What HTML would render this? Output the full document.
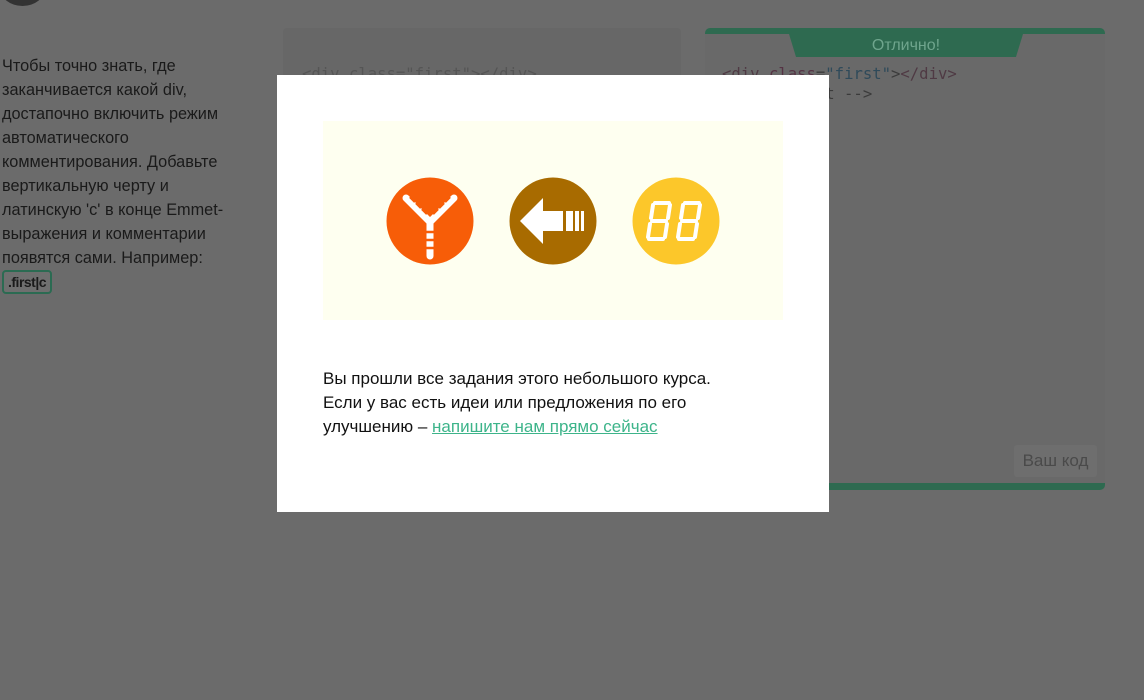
<!DOCTYPE html>
<html><head><meta charset="utf-8"><style>
body{margin:0;width:1144px;height:700px;background:#6b6b6b;position:relative;overflow:hidden;font-family:"Liberation Sans","DejaVu Sans",sans-serif;}
.abs{position:absolute}
.lt{left:2px;top:54px;width:250px;font-size:16.3px;line-height:24px;color:#1a1a1a}
.code{display:inline-block;border:2px solid #2b6b52;border-radius:4px;padding:0 4px;font-weight:bold;font-size:14px;line-height:20px;background:#6f6f6f;letter-spacing:-0.5px}
.mono{font-family:"DejaVu Sans Mono","Liberation Mono",monospace;font-size:15.6px;line-height:20px}
</style></head><body>
<div class="abs" style="left:0;top:-30px;width:45px;height:36px;border-radius:50%;background:#333"></div>
<div class="abs lt">Чтобы точно знать, где заканчивается какой div, достапочно включить режим автоматического комментирования. Добавьте вертикальную черту и латинскую 'c' в конце Emmet-выражения и комментарии появятся сами. Например:<br><span class="code">.first|c</span></div>
<div class="abs" style="left:283px;top:28px;width:398px;height:470px;background:#676767;border-radius:4px"></div>
<div class="abs mono" style="left:302px;top:64px;color:#555">&lt;div class="first"&gt;&lt;/div&gt;</div>
<div class="abs" style="left:705px;top:28px;border-top:6px solid #2e6a50;border-bottom:7px solid #2e6a50;border-radius:5px;box-sizing:border-box;width:400px;height:462px;background:#696969"></div>
<div class="abs" style="left:789px;top:34px;width:234px;height:23px;background:#2e6a50;clip-path:polygon(0 0,100% 0,97% 100%,3% 100%);color:#6fa58d;font-size:16px;text-align:center;line-height:23px">Отлично!</div>
<div class="abs mono" style="left:722px;top:64px;color:#3b3b3b"><span style="color:#4f3a44">&lt;div</span> <span style="color:#534">class</span>=<span style="color:#2f4a5a">"first"</span>&gt;<span style="color:#4f3a44">&lt;/div&gt;</span><br>&lt;!-- /.first --&gt;</div>
<div class="abs" style="left:1014px;top:445px;width:83px;height:32px;background:#6e6e6e;border-radius:3px;color:#4a4a4a;font-size:17px;line-height:32px;text-align:center">Ваш код</div>
<div class="abs" style="left:277px;top:75px;width:552px;height:437px;background:#fff">
 <div class="abs" style="left:46px;top:46px;width:460px;height:199px;background:#fefff0"></div>
 <svg class="abs" style="left:46px;top:46px" width="460" height="199" viewBox="323 121 460 199">
  <circle cx="430" cy="221" r="43.5" fill="#f75d08"/>
  <g stroke="#fff" stroke-width="7" stroke-linecap="round" fill="none">
   <path d="M406 198 L430 222 L454 198 M430 222 L430 256"/>
  </g>
  <g stroke="#f75d08" stroke-width="2.5">
   <path d="M410 197 l5 5 M416 203 l5 5 M422 209 l5 5 M450 197 l-5 5 M444 203 l-5 5 M438 209 l-5 5 M426 232 h8 M426 240 h8 M426 248 h8"/>
  </g>
  <circle cx="553" cy="221" r="43.5" fill="#a86b00"/>
  <path d="M520 221 L543 198 L543 211 L563 211 L563 231 L543 231 L543 244 Z" fill="#fff"/>
  <rect x="566" y="211" width="7" height="20" fill="#fff"/><rect x="575" y="211" width="4" height="20" fill="#fff"/><rect x="581" y="211" width="3" height="20" fill="#fff"/>
  <circle cx="676" cy="221" r="43.5" fill="#fcc72a"/>
  <g stroke="#fff" stroke-width="4" fill="none" stroke-linecap="round">
   <path d="M655 203 h14 M652 221 h14 M649 239 h14 M653 205 l-2 13 M670 205 l-2 13 M650 224 l-2 13 M667 224 l-2 13"/>
   <path d="M685 203 h14 M682 221 h14 M679 239 h14 M683 205 l-2 13 M700 205 l-2 13 M680 224 l-2 13 M697 224 l-2 13"/>
  </g>
 </svg>
 <div class="abs" style="left:46px;top:292px;font-size:17px;line-height:24px;color:#111;width:440px">Вы прошли все задания этого небольшого курса.<br>Если у вас есть идеи или предложения по его улучшению – <span style="color:#3db48a;text-decoration:underline">напишите нам прямо сейчас</span></div>
</div>
</body></html>
